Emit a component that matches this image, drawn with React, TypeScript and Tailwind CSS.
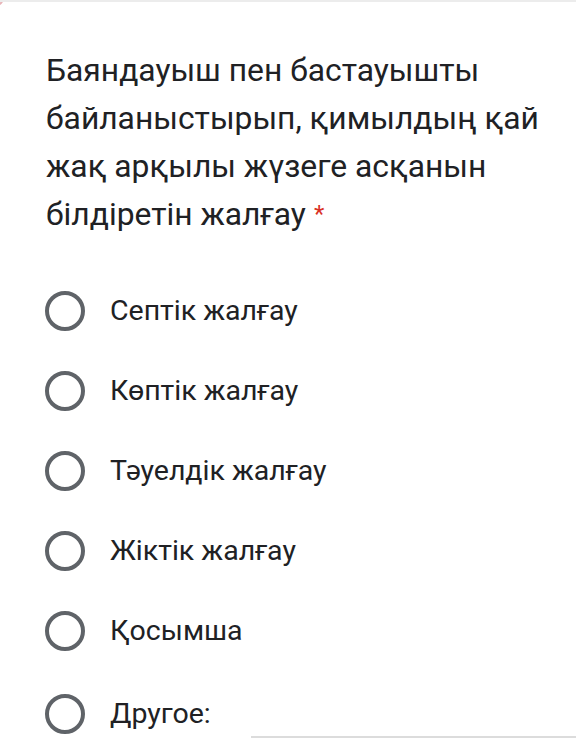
import React from 'react';

const options = ['Септік жалғау', 'Көптік жалғау', 'Тәуелдік жалғау', 'Жіктік жалғау', 'Қосымша'];

const Radio: React.FC = () => (
  <div className="w-10 h-10 rounded-full border-[4px] border-[#5f6368] shrink-0" />
);

const App: React.FC = () => {
  return (
    <div
      className="relative w-[576px] h-[752px] bg-white overflow-hidden border-t-2 border-[#ececec]"
      style={{ fontFamily: 'Roboto, "Noto Sans", sans-serif' }}
    >
      {/* card corner peeking in */}
      <div className="absolute -top-3 -left-3 w-4 h-4 rounded-full border-2 border-[#e8b4b8]" />

      <div className="pl-[46px] pt-[44px]">
        <h1 className="text-[31.8px] leading-[48px] text-[#202124] font-normal whitespace-nowrap">
          Баяндауыш пен бастауышты
          <br />
          байланыстырып, қимылдың қай
          <br />
          жақ арқылы жүзеге асқанын
          <br />
          білдіретін жалғау
          <span className="text-[#d93025] text-[24px] ml-[8px] align-top">*</span>
        </h1>

        <div className="mt-[33px] -ml-[1px] flex flex-col">
          {options.map((o) => (
            <div key={o} className="h-20 flex items-center gap-[25px]">
              <Radio />
              <span className="text-[28.5px] text-[#202124]">{o}</span>
            </div>
          ))}
          <div className="h-20 mt-[3px] flex items-center">
            <div className="flex items-center gap-[25px]">
              <Radio />
              <span className="text-[28.5px] text-[#202124]">Другое:</span>
            </div>
            <div className="ml-[40px] flex-1 self-end mb-[16px] h-[2px] bg-[#dcdcdc]" />
          </div>
        </div>
      </div>
    </div>
  );
};

export default App;
